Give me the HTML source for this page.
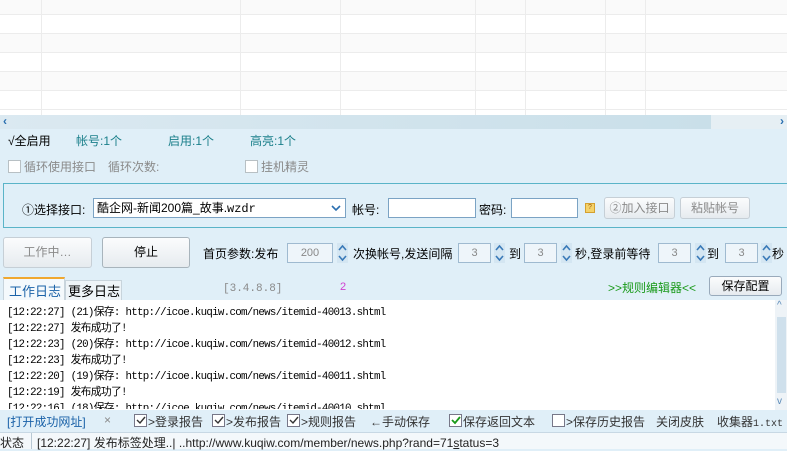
<!DOCTYPE html>
<html><head><meta charset="utf-8"><style>
*{margin:0;padding:0;box-sizing:border-box}
body{width:787px;height:449px;overflow:hidden;position:relative;background:#e0eff8;font-family:"Liberation Sans","Noto Sans CJK SC",sans-serif;font-size:12px;color:#000}
.a{position:absolute;white-space:nowrap}
.grid{position:absolute;left:0;top:0;width:787px;height:115px;background:#fff}
.row{position:absolute;left:0;width:787px;height:19px;border-bottom:1px solid #ececec}
.vl{position:absolute;top:0;width:1px;height:115px;background:#ececec}
.gray{color:#8a8a8a}
.teal{color:#1a7f8a}
.cb{position:absolute;width:13px;height:13px;border:1px solid #9aa;background:#fff}
.btn{position:absolute;border:1px solid #c6cfd6;border-radius:3px;background:linear-gradient(#fbfcfd,#e6ebef);text-align:center}
.inp{position:absolute;border:1px solid #7ba3c4;background:#fff}
.sp{position:absolute;width:11px;height:20px}
.num{position:absolute;border:1px solid #9fbad0;background:#eef5fa;color:#888;text-align:center;font-size:11px;line-height:18px}
.log{position:absolute;left:7px;font-family:"Liberation Mono","Noto Sans CJK SC",monospace;font-size:10.8px;letter-spacing:-0.7px}
</style></head><body>
<div class="grid">
<div class="row" style="top:0;background:#fafafa;height:15px"></div>
<div class="row" style="top:15px;height:19px"></div>
<div class="row" style="top:34px;background:#fafafa"></div>
<div class="row" style="top:53px"></div>
<div class="row" style="top:72px;background:#fafafa"></div>
<div class="row" style="top:91px"></div>
<div class="vl" style="left:41px"></div><div class="vl" style="left:240px"></div><div class="vl" style="left:340px"></div><div class="vl" style="left:475px"></div><div class="vl" style="left:525px"></div><div class="vl" style="left:605px"></div><div class="vl" style="left:645px"></div>
</div>
<div class="a" style="left:0;top:115px;width:787px;height:14px;background:#e6eff4"></div>
<div class="a" style="left:0;top:115px;width:711px;height:14px;background:linear-gradient(90deg,#dbe9f1,#c9dfe9)"></div>
<div class="a" style="left:3px;top:114px;color:#2a6fb0;font-weight:bold;font-size:12px">‹</div>
<div class="a" style="left:780px;top:114px;color:#2a6fb0;font-weight:bold;font-size:12px">›</div>

<div class="a" style="left:8px;top:132px">√全启用</div>
<div class="a teal" style="left:76px;top:132px">帐号:1个</div>
<div class="a teal" style="left:168px;top:132px">启用:1个</div>
<div class="a teal" style="left:250px;top:132px">高亮:1个</div>

<div class="cb" style="left:8px;top:160px;border-color:#b8c0c4"></div>
<div class="a gray" style="left:24px;top:158px">循环使用接口</div>
<div class="a gray" style="left:108px;top:158px">循环次数:</div>
<div class="cb" style="left:245px;top:160px;border-color:#b8c0c4"></div>
<div class="a gray" style="left:261px;top:158px">挂机精灵</div>

<div class="a" style="left:3px;top:183px;width:790px;height:45px;border:1px solid #5ab4c8;border-right:none"></div>
<div class="a" style="left:22px;top:201px">①选择接口:</div>
<div class="inp" style="left:93px;top:198px;width:253px;height:20px;padding-left:3px;line-height:18px;font-size:12px">酷企网-新闻200篇_故事.<span style="font-family:'Liberation Mono'">wzdr</span>
<svg style="position:absolute;right:4px;top:6px" width="10" height="7"><path d="M1 1L5 5L9 1" stroke="#2a6fb0" stroke-width="1.6" fill="none"/></svg></div>
<div class="a" style="left:352px;top:201px">帐号:</div>
<div class="inp" style="left:388px;top:198px;width:88px;height:20px"></div>
<div class="a" style="left:479px;top:201px">密码:</div>
<div class="inp" style="left:511px;top:198px;width:67px;height:20px"></div>
<div class="a" style="left:585px;top:203px;width:10px;height:10px;background:#f4d26a;border:1px solid #d4a030;font-size:7px;line-height:8px;text-align:center;color:#a06010">?</div>
<div class="btn gray" style="left:604px;top:197px;width:71px;height:22px;line-height:20px">②加入接口</div>
<div class="btn gray" style="left:680px;top:197px;width:70px;height:22px;line-height:20px">粘贴帐号</div>

<div class="btn gray" style="left:3px;top:237px;width:89px;height:31px;line-height:29px">工作中…</div>
<div class="btn" style="left:102px;top:237px;width:88px;height:31px;line-height:29px;border-color:#a8b4bc">停止</div>
<div class="a" style="left:203px;top:245px">首页参数:发布</div>
<div class="num" style="left:287px;top:243px;width:46px;height:20px">200</div>
<div class="a" style="left:353px;top:245px">次换帐号,发送间隔</div>
<div class="num" style="left:458px;top:243px;width:33px;height:20px">3</div>
<div class="a" style="left:509px;top:245px">到</div>
<div class="num" style="left:524px;top:243px;width:33px;height:20px">3</div>
<div class="a" style="left:575px;top:245px">秒,登录前等待</div>
<div class="num" style="left:658px;top:243px;width:33px;height:20px">3</div>
<div class="a" style="left:707px;top:245px">到</div>
<div class="num" style="left:725px;top:243px;width:33px;height:20px">3</div>
<div class="a" style="left:772px;top:245px">秒</div>
<svg class="sp" style="left:337px;top:243px" viewBox="0 0 11 20"><rect width="11" height="20" fill="#d4e6f2"/><path d="M2 7L5.5 3L9 7M2 13L5.5 17L9 13" stroke="#3a7ab8" stroke-width="1.6" fill="none"/></svg>
<svg class="sp" style="left:494px;top:243px" viewBox="0 0 11 20"><rect width="11" height="20" fill="#d4e6f2"/><path d="M2 7L5.5 3L9 7M2 13L5.5 17L9 13" stroke="#3a7ab8" stroke-width="1.6" fill="none"/></svg>
<svg class="sp" style="left:561px;top:243px" viewBox="0 0 11 20"><rect width="11" height="20" fill="#d4e6f2"/><path d="M2 7L5.5 3L9 7M2 13L5.5 17L9 13" stroke="#3a7ab8" stroke-width="1.6" fill="none"/></svg>
<svg class="sp" style="left:695px;top:243px" viewBox="0 0 11 20"><rect width="11" height="20" fill="#d4e6f2"/><path d="M2 7L5.5 3L9 7M2 13L5.5 17L9 13" stroke="#3a7ab8" stroke-width="1.6" fill="none"/></svg>
<svg class="sp" style="left:761px;top:243px" viewBox="0 0 11 20"><rect width="11" height="20" fill="#d4e6f2"/><path d="M2 7L5.5 3L9 7M2 13L5.5 17L9 13" stroke="#3a7ab8" stroke-width="1.6" fill="none"/></svg>

<div class="a" style="left:3px;top:277px;width:62px;height:23px;background:#f4f9fc;border-top:2px solid #f0a830;border-left:1px solid #c8d4dc;border-right:1px solid #c8d4dc"></div>
<div class="a" style="left:9px;top:281px;color:#1a62a8;font-size:13px">工作日志</div>
<div class="a" style="left:65px;top:280px;width:57px;height:20px;background:#eef4f8;border:1px solid #c8d4dc;border-bottom:none"></div>
<div class="a" style="left:68px;top:281px;font-size:13px">更多日志</div>
<div class="a gray" style="left:223px;top:283px;font-family:'Liberation Mono';font-size:11px">[3.4.8.8]</div>
<div class="a" style="left:340px;top:281px;color:#d040d0;font-size:11px">2</div>
<div class="a" style="left:608px;top:279px;color:#1a9a1a">>>规则编辑器<<</div>
<div class="btn" style="left:709px;top:276px;width:73px;height:20px;line-height:18px;border-color:#9ab">保存配置</div>

<div class="a" style="left:0;top:300px;width:775px;height:110px;background:#fff"></div>
<div class="a" style="left:775px;top:300px;width:12px;height:110px;background:#eef3f7"></div>
<div class="a" style="left:777px;top:317px;width:9px;height:76px;background:#cfe0ec"></div>
<div class="a" style="left:777px;top:300px;color:#5a8ab8;font-size:10px">^</div>
<div class="a" style="left:777px;top:396px;color:#5a8ab8;font-size:10px">v</div>
<div class="log" style="top:303px">[12:22:27] (21)保存: http://icoe.kuqiw.com/news/itemid-40013.shtml</div>
<div class="log" style="top:319px">[12:22:27] 发布成功了!</div>
<div class="log" style="top:335px">[12:22:23] (20)保存: http://icoe.kuqiw.com/news/itemid-40012.shtml</div>
<div class="log" style="top:351px">[12:22:23] 发布成功了!</div>
<div class="log" style="top:367px">[12:22:20] (19)保存: http://icoe.kuqiw.com/news/itemid-40011.shtml</div>
<div class="log" style="top:383px">[12:22:19] 发布成功了!</div>
<div class="log" style="top:399px;height:10px;overflow:hidden">[12:22:16] (18)保存: http://icoe.kuqiw.com/news/itemid-40010.shtml</div>

<div class="a" style="left:7px;top:413px;color:#1a62a8">[打开成功网址]</div>
<div class="a gray" style="left:104px;top:413px">×</div>
<div class="cb" style="left:134px;top:414px;border-color:#778"><svg width="11" height="11" style="position:absolute;left:0;top:0"><path d="M2 5L5 8L10 2" stroke="#333" stroke-width="1.4" fill="none"/></svg></div>
<div class="a" style="left:148px;top:413px;color:#333">>登录报告</div>
<div class="cb" style="left:212px;top:414px;border-color:#778"><svg width="11" height="11" style="position:absolute;left:0;top:0"><path d="M2 5L5 8L10 2" stroke="#333" stroke-width="1.4" fill="none"/></svg></div>
<div class="a" style="left:226px;top:413px;color:#333">>发布报告</div>
<div class="cb" style="left:287px;top:414px;border-color:#778"><svg width="11" height="11" style="position:absolute;left:0;top:0"><path d="M2 5L5 8L10 2" stroke="#333" stroke-width="1.4" fill="none"/></svg></div>
<div class="a" style="left:301px;top:413px;color:#333">>规则报告</div>
<div class="a" style="left:370px;top:413px;color:#333">←手动保存</div>
<div class="cb" style="left:449px;top:414px;border-color:#778"><svg width="11" height="11" style="position:absolute;left:0;top:0"><path d="M2 5L5 8L10 2" stroke="#1a9a1a" stroke-width="1.8" fill="none"/></svg></div>
<div class="a" style="left:463px;top:413px;color:#333">保存返回文本</div>
<div class="cb" style="left:552px;top:414px;border-color:#778"></div>
<div class="a" style="left:566px;top:413px;color:#333">>保存历史报告</div>
<div class="a" style="left:656px;top:413px;color:#333">关闭皮肤</div>
<div class="a" style="left:717px;top:413px;color:#333">收集器<span style="font-family:'Liberation Mono';font-size:10px">1.txt</span></div>

<div class="a" style="left:0;top:432px;width:787px;height:17px;background:#f4f8fb;border-top:1px solid #c8d8e4"></div>
<div class="a" style="left:0;top:434px;color:#222">状态</div>
<div class="a" style="left:31px;top:433px;width:1px;height:16px;background:#b8c8d4"></div>
<div class="a" style="left:37px;top:434px;color:#222">[12:22:27] 发布标签处理..| ..http://www.kuqiw.com/member/news.php?rand=71<u>s</u>tatus=3</div>
</body></html>
